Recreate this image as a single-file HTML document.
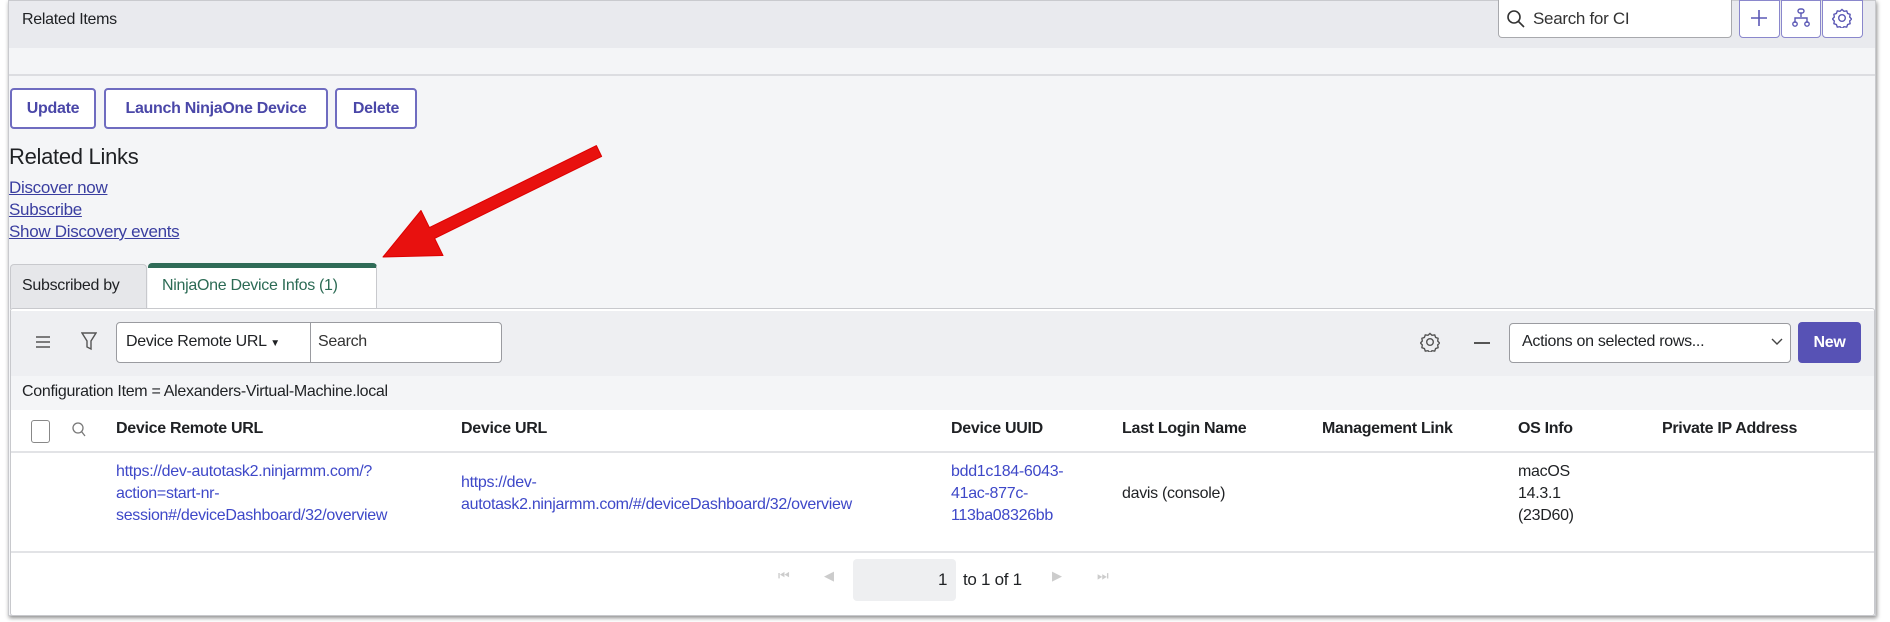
<!DOCTYPE html>
<html><head><meta charset="utf-8"><style>
*{margin:0;padding:0;box-sizing:border-box}
body{width:1890px;height:622px;background:#fff;position:relative;overflow:hidden;font-family:"Liberation Sans",sans-serif;color:#1f2124;font-size:16px;letter-spacing:-0.3px}
.a{position:absolute;white-space:nowrap}
.frame{left:8px;top:0;width:1868px;height:616px;background:#f4f5f7;box-shadow:1px 2px 4px rgba(0,0,0,.45);border:1px solid #c9cace}
.btn{border:2px solid #6f6cc0;border-radius:4px;background:#fff;color:#4a47a8;font-weight:bold;font-size:16px;height:41px;line-height:37px;text-align:center}
.lnk{color:#3a3ea0;text-decoration:underline;font-size:17px}
.ib{border:1.5px solid #8a87cc;border-radius:0 0 4px 4px;background:#fff;height:38px;top:0}
.th{font-weight:bold;top:420px;font-size:16px}
.bl{color:#3e48c8;font-size:16px;line-height:22px}
</style></head><body>
<div class="a frame"></div>
<div class="a" style="left:9px;top:1px;width:1866px;height:47px;background:#e9eaee"></div>
<div class="a" style="left:22px;top:11px;font-size:16px">Related Items</div>
<div class="a" style="left:9px;top:74px;width:1866px;height:2px;background:#dcdde1"></div>
<div class="a" style="left:1498px;top:0;width:234px;height:38px;background:#fff;border:1.5px solid #a8a9ad;border-top:none;border-radius:0 0 4px 4px"></div>
<svg class="a" style="left:1506px;top:9px" width="20" height="20" viewBox="0 0 20 20"><circle cx="8" cy="8" r="6" fill="none" stroke="#333" stroke-width="1.6"/><path d="M12.5 12.5L18 18" stroke="#333" stroke-width="1.6"/></svg>
<div class="a" style="left:1533px;top:9px;font-size:17px;color:#333">Search for CI</div>
<div class="a ib" style="left:1739px;width:41px"></div>
<div class="a ib" style="left:1781px;width:40px"></div>
<div class="a ib" style="left:1822px;width:41px"></div>
<svg class="a" style="left:1749px;top:8px" width="20" height="20"><path d="M10 2V18M2 10H18" stroke="#5b58b5" stroke-width="1.6"/></svg>
<svg class="a" style="left:1791px;top:8px" width="20" height="20" fill="none" stroke="#5b58b5" stroke-width="1.4"><rect x="7" y="1" width="6" height="4" rx="2"/><path d="M10 5V9M4 15V10H16V15"/><circle cx="4" cy="16" r="2.2"/><circle cx="16" cy="16" r="2.2"/></svg>
<svg class="a" style="left:1832px;top:8px" width="20" height="20" fill="none" stroke="#5b58b5" stroke-width="1.4"><path d="M10 1.5l2 1.8 2.7-.4.9 2.5 2.5.9-.4 2.7 1.8 2-1.8 2 .4 2.7-2.5.9-.9 2.5-2.7-.4-2 1.8-2-1.8-2.7.4-.9-2.5-2.5-.9.4-2.7-1.8-2 1.8-2-.4-2.7 2.5-.9.9-2.5 2.7.4z"/><circle cx="10" cy="10" r="3.3"/></svg>

<div class="a btn" style="left:10px;top:88px;width:86px">Update</div>
<div class="a btn" style="left:104px;top:88px;width:224px">Launch NinjaOne Device</div>
<div class="a btn" style="left:335px;top:88px;width:82px">Delete</div>
<div class="a" style="left:9px;top:144px;font-size:22px">Related Links</div>
<div class="a lnk" style="left:9px;top:178px">Discover now</div>
<div class="a lnk" style="left:9px;top:200px">Subscribe</div>
<div class="a lnk" style="left:9px;top:222px">Show Discovery events</div>

<div class="a" style="left:10px;top:264px;width:137px;height:45px;background:#e6e7ea;border:1px solid #c8c9cd;border-bottom:none;border-radius:4px 4px 0 0"></div>
<div class="a" style="left:22px;top:277px;font-size:16px">Subscribed by</div>
<div class="a" style="left:148px;top:263px;width:229px;height:47px;background:#fff;border-top:5px solid #2f6b57;border-right:1px solid #c8c9cd;border-radius:4px 4px 0 0"></div>
<div class="a" style="left:162px;top:277px;font-size:16px;color:#2c6b55">NinjaOne Device Infos (1)</div>
<div class="a" style="left:10px;top:308px;width:1865px;height:308px;background:#fff;border:1px solid #c8c9cd;border-radius:3px"></div>
<div class="a" style="left:11px;top:311px;width:1863px;height:65px;background:#eeeff2"></div>
<svg class="a" style="left:35px;top:335px" width="16" height="14"><path d="M1 2H15M1 7H15M1 12H15" stroke="#555" stroke-width="1.6"/></svg>
<svg class="a" style="left:81px;top:332px" width="16" height="19" fill="none" stroke="#555" stroke-width="1.4"><path d="M1 1H15L10 9V17L6 15V9Z"/></svg>
<div class="a" style="left:116px;top:322px;width:386px;height:41px;background:#fff;border:1.5px solid #9a9ba0;border-radius:4px"></div>
<div class="a" style="left:310px;top:323px;width:1px;height:39px;background:#9a9ba0"></div>
<div class="a" style="left:126px;top:333px;font-size:16px">Device Remote URL <span style="font-size:10px">▼</span></div>
<div class="a" style="left:318px;top:333px;font-size:16px;color:#333">Search</div>
<svg class="a" style="left:1420px;top:332px" width="20" height="20" fill="none" stroke="#555" stroke-width="1.4"><path d="M10 1.5l2 1.8 2.7-.4.9 2.5 2.5.9-.4 2.7 1.8 2-1.8 2 .4 2.7-2.5.9-.9 2.5-2.7-.4-2 1.8-2-1.8-2.7.4-.9-2.5-2.5-.9.4-2.7-1.8-2 1.8-2-.4-2.7 2.5-.9.9-2.5 2.7.4z"/><circle cx="10" cy="10" r="3.3"/></svg>
<div class="a" style="left:1474px;top:342px;width:16px;height:2px;background:#555"></div>
<div class="a" style="left:1509px;top:323px;width:282px;height:40px;background:#fff;border:1.5px solid #9a9ba0;border-radius:4px"></div>
<div class="a" style="left:1522px;top:333px;font-size:16px">Actions on selected rows...</div>
<svg class="a" style="left:1771px;top:338px" width="12" height="8"><path d="M1 1L6 6L11 1" fill="none" stroke="#444" stroke-width="1.4"/></svg>
<div class="a" style="left:1798px;top:322px;width:63px;height:41px;background:#5752b5;border-radius:4px;color:#fff;font-weight:bold;text-align:center;line-height:41px;font-size:16px">New</div>
<div class="a" style="left:11px;top:376px;width:1863px;height:34px;background:#f4f5f7"></div>
<div class="a" style="left:22px;top:383px;font-size:16px">Configuration Item = Alexanders-Virtual-Machine.local</div>
<div class="a" style="left:11px;top:451px;width:1863px;height:1.5px;background:#e2e3e6"></div>
<div class="a" style="left:31px;top:420px;width:19px;height:23px;border:1.5px solid #888;border-radius:3px;background:#fff"></div>
<svg class="a" style="left:71px;top:421px" width="16" height="18" fill="none" stroke="#777" stroke-width="1.3"><circle cx="7" cy="7" r="5"/><path d="M10.5 10.5L14 15"/></svg>
<div class="a th" style="left:116px">Device Remote URL</div>
<div class="a th" style="left:461px">Device URL</div>
<div class="a th" style="left:951px">Device UUID</div>
<div class="a th" style="left:1122px">Last Login Name</div>
<div class="a th" style="left:1322px">Management Link</div>
<div class="a th" style="left:1518px">OS Info</div>
<div class="a th" style="left:1662px">Private IP Address</div>
<div class="a bl" style="left:116px;top:461px">https://dev-autotask2.ninjarmm.com/?<br>action=start-nr-<br>session#/deviceDashboard/32/overview</div>
<div class="a bl" style="left:461px;top:472px">https://dev-<br>autotask2.ninjarmm.com/#/deviceDashboard/32/overview</div>
<div class="a bl" style="left:951px;top:461px">bdd1c184-6043-<br>41ac-877c-<br>113ba08326bb</div>
<div class="a" style="left:1122px;top:483px;line-height:22px">davis (console)</div>
<div class="a" style="left:1518px;top:461px;line-height:22px">macOS<br>14.3.1<br>(23D60)</div>
<div class="a" style="left:11px;top:551px;width:1863px;height:1.5px;background:#e2e3e6"></div>
<div class="a" style="left:778px;top:568px;color:#ccc;font-size:13px">⏮</div>
<div class="a" style="left:824px;top:568px;color:#ccc;font-size:13px">◀</div>
<div class="a" style="left:853px;top:559px;width:103px;height:42px;background:#eeeff1;border-radius:4px"></div>
<div class="a" style="left:938px;top:570px;font-size:17px">1</div>
<div class="a" style="left:963px;top:570px;font-size:17px">to 1 of 1</div>
<div class="a" style="left:1052px;top:568px;color:#ccc;font-size:13px">▶</div>
<div class="a" style="left:1097px;top:568px;color:#ccc;font-size:13px">⏭</div>
<svg class="a" style="left:370px;top:140px" width="240" height="130"><path d="M13 117L51 70.5L59.4 87.6L226.4 5.6L231.6 16.4L64.6 98.4L73 115.5Z" fill="#e8110f" stroke="#d00" stroke-width="1" stroke-linejoin="round"/></svg>
</body></html>
